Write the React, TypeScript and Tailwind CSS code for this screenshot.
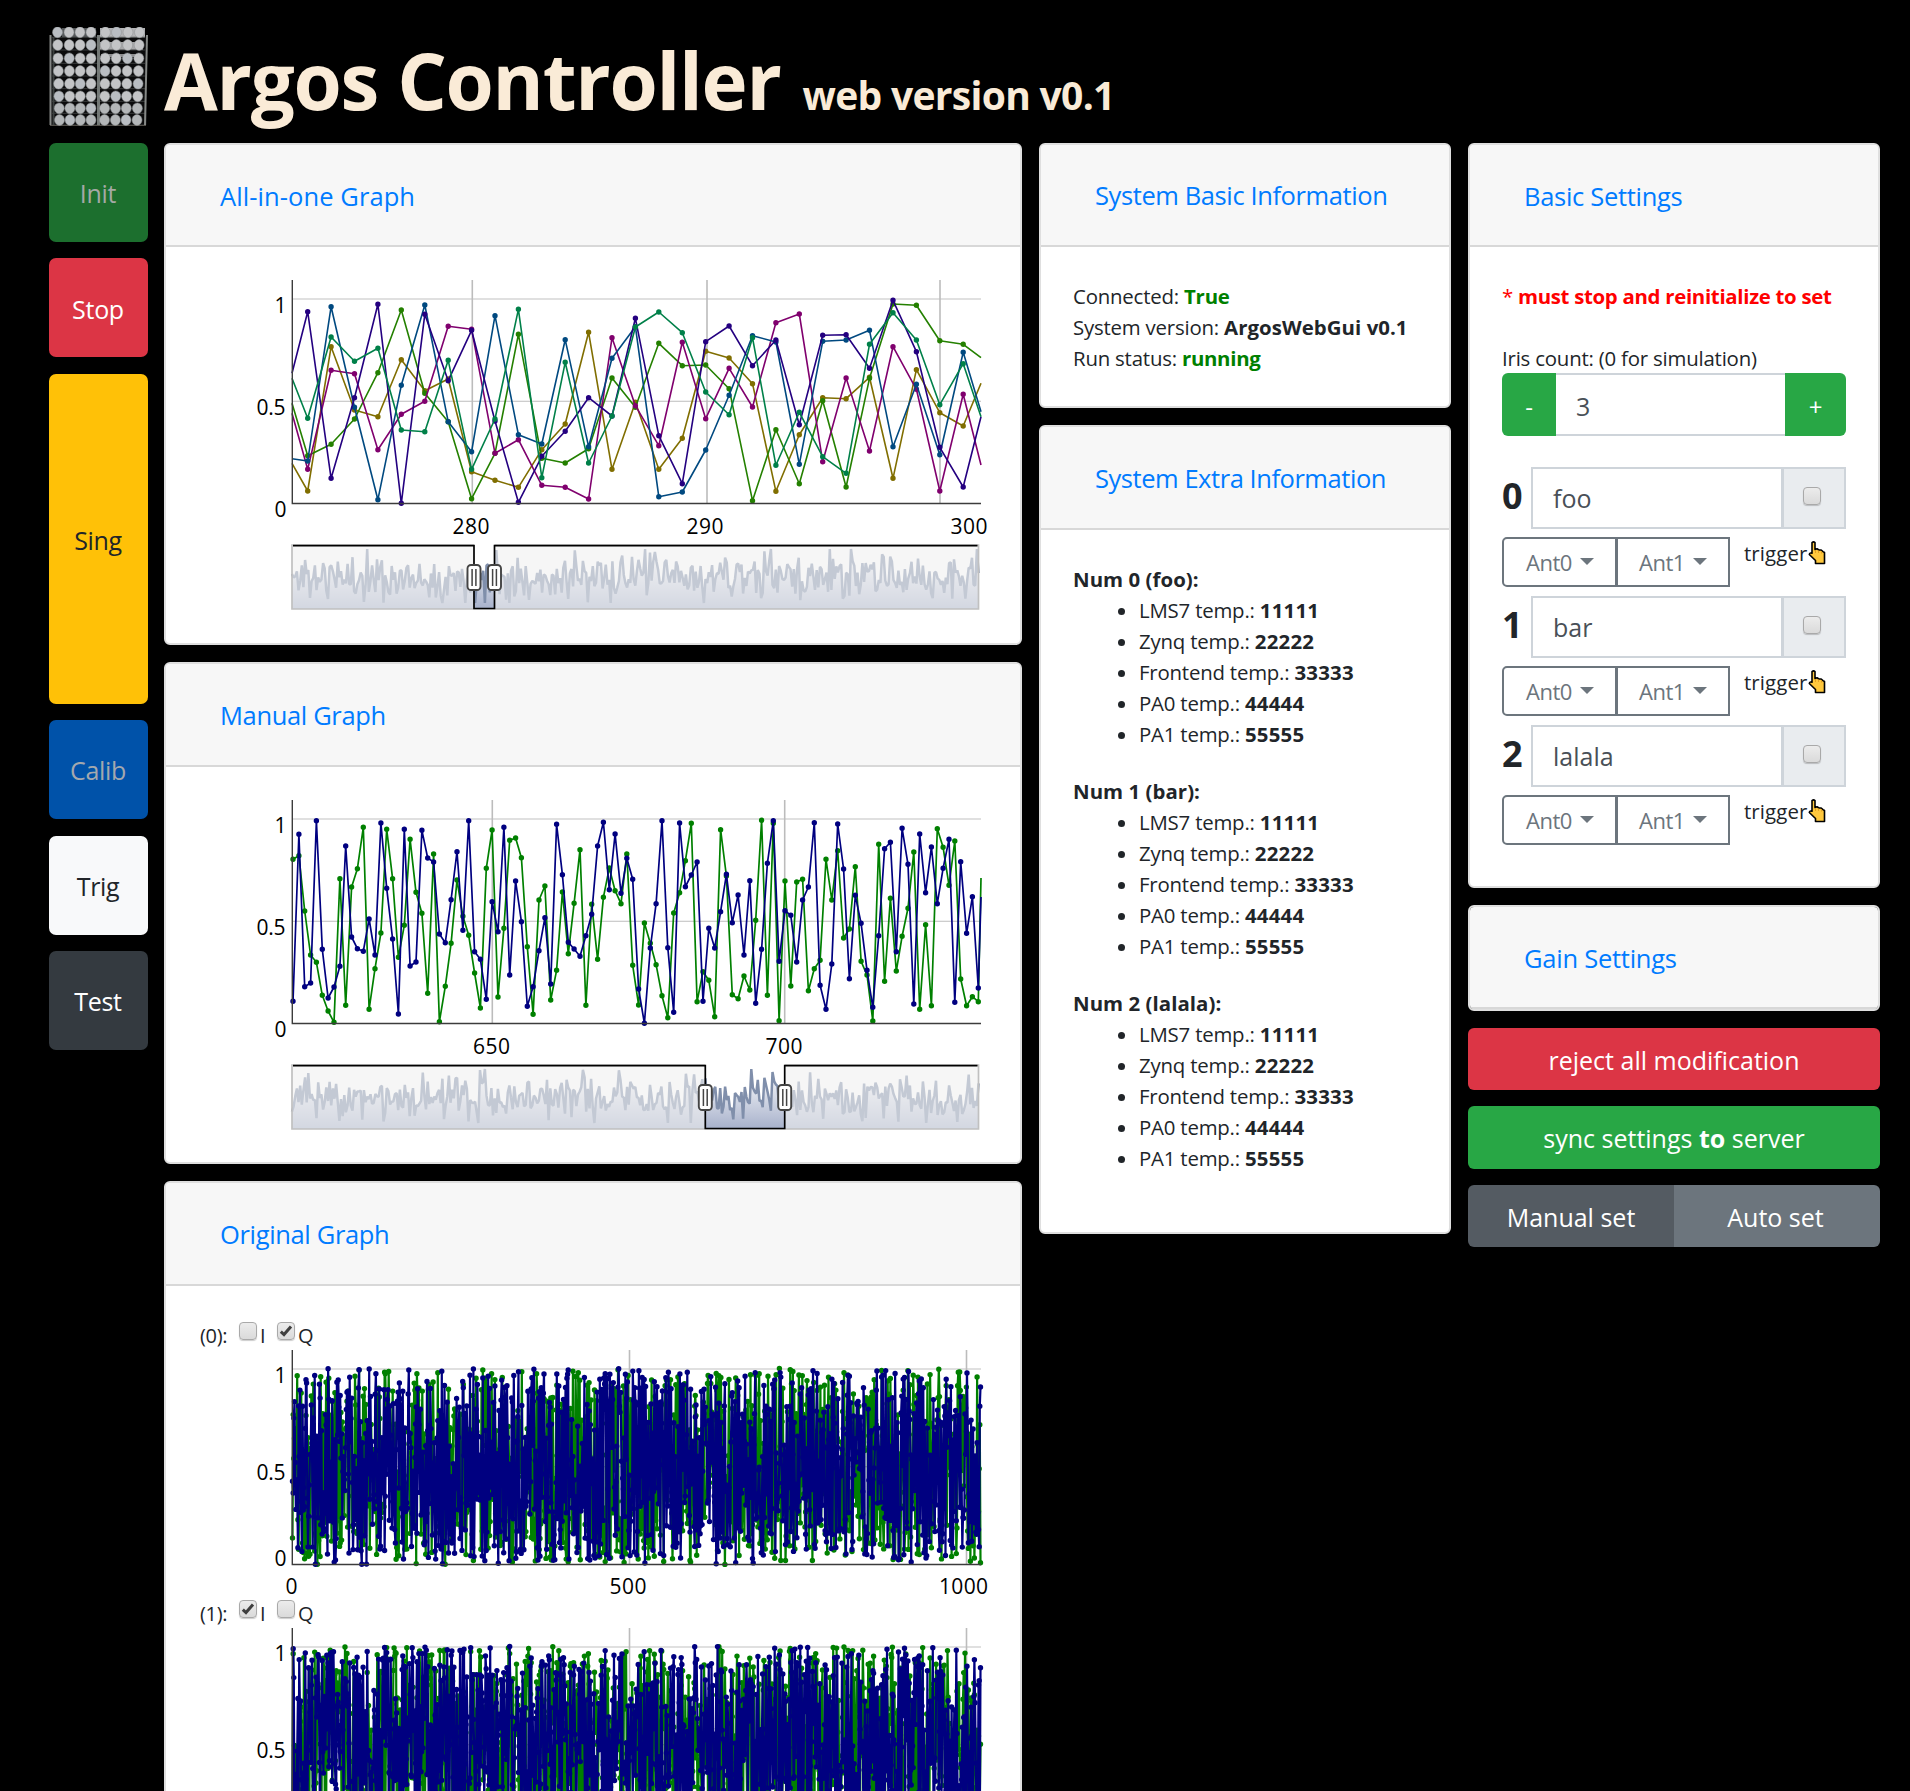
import React from "react";

/* ---------- sample data ---------- */

type Series = { color: string; ys: number[] };

// Plot values are stored in thirds of a pixel below the top of the plot frame.
const ALL_SERIES: Series[] = [
  { color: "#806e00", ys: [580, 663, 230, 420, 440, 269, 362, 327, 605, 631, 652, 539, 462, 187, 598, 397, 598, 505, 244, 264, 341, 664, 494, 383, 386, 322, 625, 299, 428, 468, 340] },
  { color: "#248000", ys: [400, 557, 523, 447, 308, 120, 370, 455, 686, 550, 193, 565, 579, 536, 324, 412, 220, 287, 285, 356, 692, 479, 641, 392, 651, 325, 102, 106, 212, 223, 263] },
  { color: "#80006e", ys: [430, 598, 301, 311, 539, 433, 394, 169, 178, 550, 509, 646, 652, 687, 203, 407, 527, 217, 446, 295, 411, 158, 132, 575, 324, 543, 230, 358, 663, 373, 585] },
  { color: "#004980", ys: [566, 573, 110, 412, 689, 346, 105, 455, 545, 137, 494, 522, 209, 530, 265, 170, 680, 666, 540, 376, 197, 216, 583, 214, 210, 181, 530, 343, 554, 247, 425] },
  { color: "#240080", ys: [310, 125, 625, 383, 103, 700, 133, 332, 181, 453, 697, 559, 484, 383, 438, 145, 497, 641, 215, 168, 287, 210, 464, 196, 194, 295, 91, 245, 532, 651, 440] },
  { color: "#008049", ys: [325, 445, 201, 274, 235, 480, 485, 271, 598, 447, 118, 623, 277, 579, 438, 171, 126, 188, 366, 434, 203, 586, 427, 560, 610, 223, 128, 210, 404, 281, 440] },
];

const MANUAL_GREEN = [
  208, 197, 363, 495, 517, 616, 663, 697, 266, 646, 291, 236, 112, 658, 536, 429, 118, 266, 502, 406, 148, 307, 370, 610, 192, 695, 589, 460, 270, 379,
  436, 549, 654, 235, 120, 621, 415, 151, 144, 203, 470, 673, 330, 288, 630, 541, 306, 491, 340, 179, 646, 343, 508, 322, 234, 302, 341, 192,
  526, 645, 399, 460, 524, 617, 683, 369, 308, 212, 100, 635, 545, 571, 680, 119, 258, 614, 626, 558, 600, 391, 91, 616, 100, 692, 273, 588, 276, 268,
  602, 536, 511, 208, 330, 182, 444, 417, 230, 514, 555, 693, 163, 574, 325, 543, 439, 355, 186, 658, 404, 647, 116, 172, 286, 153, 567, 647, 620, 635,
];
const MANUAL_NAVY = [
  634, 133, 590, 579, 92, 478, 624, 591, 529, 168, 441, 476, 484, 387, 495, 99, 295, 447, 672, 118, 528, 516, 121, 204, 216, 432, 458, 329, 185, 421,
  92, 485, 508, 628, 335, 425, 112, 555, 273, 395, 649, 590, 482, 383, 582, 103, 254, 457, 477, 499, 437, 373, 168, 97, 299, 132, 310, 205,
  268, 597, 700, 474, 341, 92, 473, 667, 99, 290, 255, 216, 634, 415, 474, 365, 253, 398, 315, 495, 272, 640, 478, 220, 92, 514, 362, 376, 516, 330,
  291, 98, 586, 658, 522, 102, 237, 566, 316, 400, 541, 652, 437, 176, 157, 485, 115, 223, 642, 132, 308, 171, 341, 235, 148, 637, 215, 430, 320, 594,
];

function rng(seed: number) {
  let s = seed;
  return () => {
    s = (s + 0x6d2b79f5) | 0;
    let t = Math.imul(s ^ (s >>> 15), 1 | s);
    t = (t + Math.imul(t ^ (t >>> 7), 61 | t)) ^ t;
    return ((t ^ (t >>> 14)) >>> 0) / 4294967296;
  };
}

const LEFT = 92;
const RIGHT = 781;

type Pt = [number, number];
const line = (pts: Pt[]) => "M" + pts.map(([x, y]) => `${x.toFixed(1)} ${y.toFixed(1)}`).join("L");
const dots = (pts: Pt[]) => pts.map(([x, y]) => `M${x.toFixed(1)} ${y.toFixed(1)}h0`).join("");

function Trace({ pts, color, marks = pts, w = 1.7, d = 5.4 }: { pts: Pt[]; color: string; marks?: Pt[]; w?: number; d?: number }) {
  return (
    <g fill="none" stroke={color} strokeLinejoin="round">
      <path d={line(pts)} strokeWidth={w} />
      <path d={dots(marks)} strokeWidth={d} strokeLinecap="round" />
    </g>
  );
}

function Frame({ top, height, grid, labels, zero = true }: { top: number; height: number; grid: number[]; labels: [string, number][]; zero?: boolean }) {
  const base = top + height;
  const one = top + 19;
  const half = (one + base) / 2;
  const small = height < 220;
  return (
    <g>
      <path d={`M${LEFT} ${one}H${RIGHT}`} stroke="#e0e0e0" strokeWidth="2" />
      <path d={`M${LEFT} ${half}H${RIGHT}`} stroke="#bdbdbd" strokeWidth="1" />
      {grid.map((x) => (
        <path key={x} d={`M${x} ${top}V${base}`} stroke="#bcbcbc" strokeWidth="1.6" />
      ))}
      <g fontSize="21" fill="#000" textAnchor="end">
        <text x="86.5" y={one + 14}>1</text>
        <text x="85.5" y={half + (small ? 13 : 14)} textLength="29">0.5</text>
        {zero && <text x="86.500" y={base + (small ? 1 : 13.5)}>0</text>}
      </g>
      <g fontSize="21" fill="#000" textAnchor="middle">
        {labels.map(([t, x]) => (
          <text key={t} x={x} y={base + (small ? 29 : 30.5)} textLength={t.length * 12.3}>{t}</text>
        ))}
      </g>
    </g>
  );
}

function Axes({ top, height }: { top: number; height: number }) {
  return <path d={`M${LEFT + 0.3} ${top}V${top + height}H${RIGHT}`} fill="none" stroke="#3c3c3c" strokeWidth="1.4" />;
}

function Handle({ x, y }: { x: number; y: number }) {
  return (
    <g>
      <rect x={x - 6.5} y={y - 12.5} width="13" height="25" rx="3.5" fill="#fff" stroke="#444" strokeWidth="1.9" />
      <path d={`M${x - 1.9} ${y - 8.5}v17M${x + 1.9} ${y - 8.5}v17`} stroke="#444" strokeWidth="1.5" />
    </g>
  );
}

function RangeSelector({ y, a, b, seed }: { y: number; a: number; b: number; seed: number }) {
  const r = rng(seed);
  const x0 = 92;
  const x1 = 778.5;
  const h = 64;
  const pts: Pt[] = [];
  const n = 420;
  for (let i = 0; i <= n; i++) {
    const v = (r() + r() + r() - 1.5) / 1.5;
    const spike = r() < 0.15 ? 1.6 : 1;
    const dy = Math.max(-26, Math.min(28, v * spike * 31));
    pts.push([x0 + ((x1 - x0) * i) / n, y + 32 - dy]);
  }
  const d = line(pts);
  const id = `range-${seed}`;
  return (
    <g>
      <defs>
        <linearGradient id={id} x1="0" y1="0" x2="0" y2="1">
          <stop offset="0" stopColor="#fff" />
          <stop offset="1" stopColor="#a7b1cb" />
        </linearGradient>
      </defs>
      <path d={`${d}V${y + h}H${x0}Z`} fill={`url(#${id})`} />
      <path d={d} fill="none" stroke="#808fab" strokeWidth="2.5" strokeLinejoin="bevel" />
      <rect x={x0} y={y} width={a - x0} height={h} fill="rgba(240,240,240,0.6)" />
      <rect x={b} y={y} width={x1 - b} height={h} fill="rgba(240,240,240,0.6)" />
      <path d={`M${a} ${y}H${x0}V${y + h}H${x1}V${y}H${b}`} fill="none" stroke="#c0c0c0" strokeWidth="1.7" />
      <path d={`M${x0 + 1} ${y + 0.7}H${a}V${y + h - 0.5}H${b}V${y + 0.7}H${x1 - 1}`} fill="none" stroke="#000" strokeWidth="1.7" />
      <Handle x={a} y={y + 32.5} />
      <Handle x={b} y={y + 32.5} />
    </g>
  );
}

const SVG = "block h-[334px] w-[808px]";

function AllInOneChart() {
  const px = (i: number) => (i === 0 ? 92 : i === 30 ? 781 : 107.7 + 23.41 * (i - 1));
  return (
    <svg className={SVG} viewBox="0 0 808 334">
      <Frame top={3} height={223.5} grid={[272.3, 507, 740]} labels={[["280", 271], ["290", 505], ["300", 769]]} />
      {ALL_SERIES.map((s) => {
        const pts: Pt[] = s.ys.map((y, i) => [px(i), y / 3 - 7]);
        return <Trace key={s.color} pts={pts} marks={pts.slice(1, -1)} color={s.color} w={1.6} />;
      })}
      <Axes top={3} height={223.5} />
      <RangeSelector y={268} a={274} b={294.5} seed={11} />
    </svg>
  );
}

function ManualChart() {
  const mk = (ys: number[]) => {
    const marks: Pt[] = ys.map((y, i) => [93 + 5.857 * i, y / 3 - 7]);
    return marks;
  };
  const g = mk(MANUAL_GREEN);
  const n = mk(MANUAL_NAVY);
  return (
    <svg className={SVG} viewBox="0 0 808 334">
      <Frame top={3} height={223.5} grid={[292.3, 584.7]} labels={[["650", 291.5], ["700", 584]]} />
      <Trace pts={[...g, [781, 81]]} marks={g} color="#008000" />
      <Trace pts={[...n, [781, 100]]} marks={n} color="#000080" />
      <Axes top={3} height={223.5} />
      <RangeSelector y={268} a={505.3} b={584.7} seed={23} />
    </svg>
  );
}

function DenseChart({ seed, bottomLabels }: { seed: number; bottomLabels: boolean }) {
  const mk = (s: number): Pt[] => {
    const r = rng(s);
    return Array.from({ length: 1024 }, (_, i) => [92.5 + (i * 688) / 1023, 217.5 - r() * 196] as Pt);
  };
  return (
    <svg className="block h-[260px] w-[808px]" viewBox="0 0 808 260">
      <Frame
        top={3}
        height={214.5}
        grid={[429.5, 766.5]}
        labels={bottomLabels ? [["0", 91.5], ["500", 428], ["1000", 763.5]] : []}
        zero={bottomLabels}
      />
      <Trace pts={mk(seed)} color="#008000" d={5.4} w={2.2} />
      <Trace pts={mk(seed + 7)} color="#000080" d={5.4} w={2.2} />
      <Axes top={3} height={214.5} />
    </svg>
  );
}

/* ---------- building blocks ---------- */

function Logo() {
  const rows = [5.3, 18, 31.3, 44, 56.7, 69.3, 81.3, 93];
  const top = [8.5, 20, 31, 42, 56.4, 67.5, 79, 90.5];
  const bottom = [10.5, 21, 31.4, 42, 55.5, 66.4, 77, 88];
  return (
    <svg className="h-[99px] w-[99px]" viewBox="0 0 99 99">
      <rect x="1" y="9" width="97" height="89" fill="#0b0b0c" />
      <rect x="13" y="1" width="34" height="9" fill="#55585a" />
      <rect x="51" y="1" width="45" height="10" fill="#b4b4b6" />
      <rect x="51" y="15" width="43" height="8" fill="#a8a8aa" />
      <rect x="52" y="27" width="40" height="3" fill="#8d8d8f" />
      {rows.map((y) => (
        <path key={y} d={`M3 ${y + 5}H96`} stroke="#3a3c3c" strokeWidth="1" />
      ))}
      <path d="M1.500 8V98M98 8L96 98" stroke="#858886" strokeWidth="2" />
      <path d="M4.500 10V98" stroke="#3c403f" strokeWidth="2" />
      <path d="M49.500 8V98" stroke="#737876" strokeWidth="3" />
      <path d="M1 98.500H97" stroke="#53504a" strokeWidth="1" />
      {rows.map((y, j) =>
        top.map((x, i) => (
          <ellipse
            key={`${i}-${j}`}
            cx={x + ((bottom[i] - x) * j) / 7}
            cy={y}
            rx="5"
            ry="5.400"
            fill={(i * 3 + j) % 5 === 0 ? "#b9bdc2" : j > 5 ? "#b3b6b8" : "#c3c4c6"}
            stroke="#8d9092"
            strokeWidth="0.5"
          />
        )),
      )}
    </svg>
  );
}

function Card({
  title,
  className = "",
  head = "h-[103px] tracking-[-0.35px]",
  children,
}: {
  title: string;
  className?: string;
  head?: string;
  children?: React.ReactNode;
}) {
  return (
    <section className={`overflow-hidden rounded-[6px] border-2 border-[#dfdfdf] bg-white ${className}`}>
      <h2 className={`flex items-center border-b-2 border-[#d8d8d8] bg-[#f7f7f7] pt-[2px] pl-[54px] text-[25.500px] text-[#007bff] ${head}`}>
        {title}
      </h2>
      {children}
    </section>
  );
}

function Check({ on = false }: { on?: boolean }) {
  return (
    <span className="flex size-[18px] shrink-0 items-center justify-center rounded-[4px] border-[1.5px] border-[#a9a9a9] bg-linear-to-b from-[#ececec] to-[#dadada] shadow-[0_1px_1px_rgba(0,0,0,0.2)]">
      {on && (
        <svg className="size-[14px]" viewBox="0 0 14 14">
          <path d="M1.800 7.600L5 10.600L12 2.600" fill="none" stroke="#3f3f3f" strokeWidth="3" />
        </svg>
      )}
    </span>
  );
}

function Hand() {
  return (
    <svg className="h-[24px] w-[18px]" viewBox="0 0 18 24">
      <path
        d="M4 1.600Q5.600.2 7 1.600V8.600L9 7.800L11 9L13.200 9L15 10.600L16.500 11.500V22.500H7.500V19.500L1.300 13.500Q1.600 11.400 4 12.200Z"
        fill="#ffc83d"
        stroke="#000"
        strokeWidth="1.600"
        strokeLinejoin="round"
      />
      <path d="M7.500 9V12M10.500 9.500V12M13.500 10V12.500" stroke="#e09b20" strokeWidth="0.900" />
    </svg>
  );
}

function Caret() {
  return <span className="mt-[-3px] border-x-[7px] border-t-[7px] border-x-transparent border-t-[#6c757d]" />;
}

function IrisRow({ index, name }: { index: number; name: string }) {
  return (
    <div className="h-[129px]">
      <div className="flex h-[62px]">
        <div className="w-[29px] pt-[3px] text-[36px] leading-[52px] font-bold text-[#212529]">{index}</div>
        <div className="w-[252px] border-2 border-[#ced4da] pt-[1px] pl-[20px] text-[25px] leading-[56px] text-[#495057]">{name}</div>
        <div className="-ml-[1px] flex w-[64px] justify-center border-2 border-[#ced4da] bg-[#e9ecef] pt-[18px] pr-[4px]">
          <Check />
        </div>
      </div>
      <div className="mt-2 flex">
        <div className="flex h-[50px] w-[115px] items-center gap-[8px] rounded-l-[5px] border-2 border-[#6c757d] pt-[1px] pl-[22px] text-[22px] tracking-[-0.5px] text-[#6c757d]">
          Ant0 <Caret />
        </div>
        <div className="-ml-[1px] flex h-[50px] w-[114px] items-center gap-[8px] border-2 border-[#6c757d] pt-[1px] pl-[21px] text-[22px] tracking-[-0.5px] text-[#6c757d]">
          Ant1 <Caret />
        </div>
        <div className="ml-[14px] flex h-[32px] items-center gap-[1px] text-[20.400px] tracking-[0.1px] text-[#212529]">
          trigger <Hand />
        </div>
      </div>
    </div>
  );
}

const TEMPS: [string, string][] = [
  ["LMS7", "11111"],
  ["Zynq", "22222"],
  ["Frontend", "33333"],
  ["PA0", "44444"],
  ["PA1", "55555"],
];

function NodeInfo({ label }: { label: string }) {
  return (
    <div className="h-[212px]">
      <div className="font-bold tracking-[0.05px]">{label}</div>
      <ul className="list-disc pl-[66px]">
        {TEMPS.map(([k, v]) => (
          <li key={k}>
            {k} temp.: <b className="tracking-[0.2px]">{v}</b>
          </li>
        ))}
      </ul>
    </div>
  );
}

const SIDE = [
  { label: "Init", cls: "h-[99px] bg-[#1c6f2e] text-[#a4a9a5]" },
  { label: "Stop", cls: "h-[99px] bg-[#dc3545] text-white" },
  { label: "Sing", cls: "h-[330px] bg-[#ffc107] text-[#212529]" },
  { label: "Calib", cls: "h-[99px] bg-[#0052a9] text-[#a3a8ae]" },
  { label: "Trig", cls: "h-[99px] bg-[#f8f9fa] text-[#212529]" },
  { label: "Test", cls: "h-[99px] bg-[#343a40] text-white" },
];

const CHANNELS = [
  { id: 0, i: false, q: true, seed: 101 },
  { id: 1, i: true, q: false, seed: 202 },
];

export default function App() {
  return (
    <div className="h-[1791px] w-[1910px] overflow-hidden bg-black pl-[49px] font-['Open_Sans',sans-serif] text-[#212529]">
      <header className="flex h-[143px] pt-[27px]">
        <Logo />
        <h1 className="mt-[-2px] ml-[16px] flex items-baseline text-[78px] leading-[110px] font-bold tracking-[-1.25px] text-[#faebd7]">
          Argos Controller
          <small className="ml-[22px] text-[39px] tracking-[-0.7px]">web version v0.1</small>
        </h1>
      </header>

      <div className="flex items-start">
        <nav className="flex w-[99px] flex-col gap-[16.400px]">
          {SIDE.map((s) => (
            <button key={s.label} className={`flex w-full items-center justify-center rounded-[7px] pt-[3px] pr-[1px] text-[25px] tracking-[-0.3px] ${s.cls}`}>
              {s.label}
            </button>
          ))}
        </nav>

        <main className="ml-[16px] flex w-[858px] flex-col gap-[17px]">
          <Card title="All-in-one Graph" className="h-[502px]" head="h-[102px] tracking-[0.08px]">
            <div className="pt-[30px] pl-[34px]">
              <AllInOneChart />
            </div>
          </Card>
          <Card title="Manual Graph" className="h-[502px]">
            <div className="pt-[30px] pl-[34px]">
              <ManualChart />
            </div>
          </Card>
          <Card title="Original Graph">
            <div className="pt-[27px] pl-[34px]">
              {CHANNELS.map((c) => (
                <div key={c.id} className="h-[278px]">
                  <div className="flex h-[34px] text-[20px]">
                    <span className="w-[39px] pt-[8px] leading-[30px] tracking-[-0.3px]">({c.id}):</span>
                    <span className="pt-[9px]"><Check on={c.i} /></span>
                    <span className="w-[20px] pt-[8px] pl-[3px] leading-[30px]">I</span>
                    <span className="pt-[9px]"><Check on={c.q} /></span>
                    <span className="pt-[8px] pl-[3px] leading-[30px]">Q</span>
                  </div>
                  <DenseChart seed={c.seed} bottomLabels={c.id === 0} />
                </div>
              ))}
            </div>
          </Card>
        </main>

        <div className="ml-[17px] flex w-[412px] flex-col gap-[17px] text-[20.400px] leading-[31.100px]">
          <Card title="System Basic Information" className="h-[265px]" head="h-[102px] tracking-[-0.4px]">
            <div className="pt-[34px] pl-[32px] tracking-[-0.2px]">
              <div>Connected: <b className="tracking-[-0.2px] text-[#008000]">True</b></div>
              <div>System version: <b className="tracking-[0.05px]">ArgosWebGui v0.1</b></div>
              <div>Run status: <b className="tracking-[-0.3px] text-[#008000]">running</b></div>
            </div>
          </Card>
          <Card title="System Extra Information" className="h-[809px]" head="h-[103px] tracking-[-0.45px]">
            <div className="pt-[34px] pl-[32px] tracking-[-0.2px]">
              <NodeInfo label="Num 0 (foo):" />
              <NodeInfo label="Num 1 (bar):" />
              <NodeInfo label="Num 2 (lalala):" />
            </div>
          </Card>
        </div>

        <div className="ml-[17px] flex w-[412px] flex-col">
          <Card title="Basic Settings" className="h-[745px]" head="h-[102px] tracking-[-0.3px]">
            <div className="px-[32px] pt-[34px] text-[20.400px] leading-[31px] tracking-[-0.2px]">
              <div className="h-[62px] font-bold tracking-[-0.3px] text-[#f00]"><span className="font-normal">*</span> must stop and reinitialize to set</div>
              <div className="h-[30px]">Iris count: (0 for simulation)</div>
              <div className="flex h-[63px] text-[24px]">
                <button className="w-[54px] rounded-l-[6px] bg-[#28a745] pt-[3px] text-white">-</button>
                <div className="flex flex-1 items-center border-y-2 border-[#ced4da] pt-[3px] pl-[20px] text-[25px] text-[#495057]">3</div>
                <button className="w-[61px] rounded-r-[6px] bg-[#28a745] pt-[3px] text-white">+</button>
              </div>
              <div className="mt-[31px] tracking-normal">
                <IrisRow index={0} name="foo" />
                <IrisRow index={1} name="bar" />
                <IrisRow index={2} name="lalala" />
              </div>
            </div>
          </Card>
          <Card title="Gain Settings" className="mt-[17px] h-[106px]" head="h-[102px] tracking-[-0.25px]" />
          <div className="mt-[17px] flex flex-col gap-[16px] text-[25px] text-white">
            <button className="h-[62px] rounded-[6px] bg-[#dc3545] pt-[3px]">reject all modification</button>
            <button className="h-[63px] rounded-[6px] bg-[#28a745] pt-[3px]">
              sync settings <b>to</b> server
            </button>
            <div className="flex h-[62px] overflow-hidden rounded-[6px]">
              <button className="w-1/2 bg-[#545b62] pt-[4px]">Manual set</button>
              <button className="w-1/2 bg-[#6c757d] pt-[4px] pr-[3px]">Auto set</button>
            </div>
          </div>
        </div>
      </div>
    </div>
  );
}
